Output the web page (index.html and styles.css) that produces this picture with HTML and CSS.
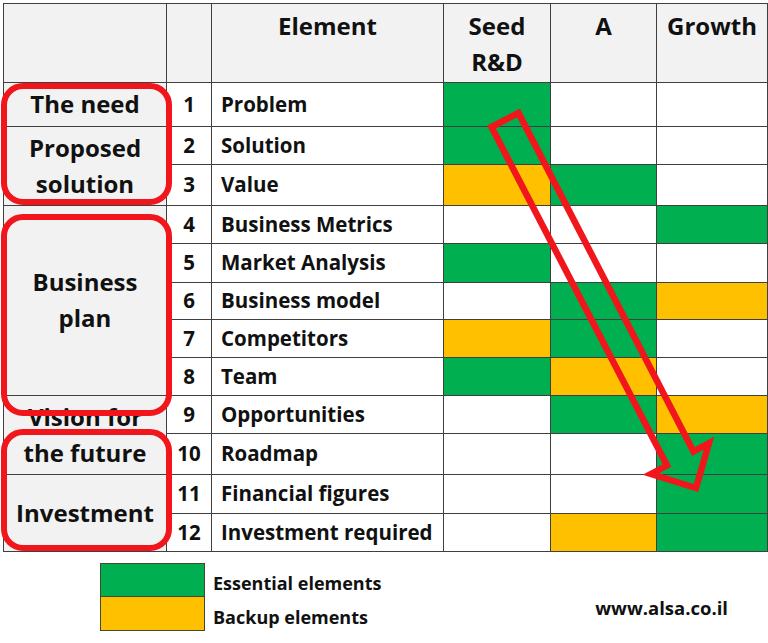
FILE: index.html
```html
<!DOCTYPE html>
<html>
<head>
<meta charset="utf-8">
<link rel="stylesheet" href="styles.css">
</head>
<body>
<div class="page">
  <div class="chart">
    <div class="grid">
      <div class="hd"></div>
      <div class="hd"></div>
      <div class="hd hd-text">Element</div>
      <div class="hd hd-text">Seed<br>R&amp;D</div>
      <div class="hd hd-text">A</div>
      <div class="hd hd-text">Growth</div>

      <div class="cat r1">The need</div>
      <div class="cat r2">Proposed<br>solution</div>
      <div class="cat r3">Business<br>plan</div>
      <div class="cat r4">Vision for<br>the future</div>
      <div class="cat r5">Investment</div>

      <div class="num">1</div><div class="el">Problem</div><div class="g"></div><div class="w"></div><div class="w"></div>
      <div class="num">2</div><div class="el">Solution</div><div class="g"></div><div class="w"></div><div class="w"></div>
      <div class="num">3</div><div class="el">Value</div><div class="y"></div><div class="g"></div><div class="w"></div>
      <div class="num">4</div><div class="el">Business Metrics</div><div class="w"></div><div class="w"></div><div class="g"></div>
      <div class="num">5</div><div class="el">Market Analysis</div><div class="g"></div><div class="w"></div><div class="w"></div>
      <div class="num">6</div><div class="el">Business model</div><div class="w"></div><div class="g"></div><div class="y"></div>
      <div class="num">7</div><div class="el">Competitors</div><div class="y"></div><div class="g"></div><div class="w"></div>
      <div class="num">8</div><div class="el">Team</div><div class="g"></div><div class="y"></div><div class="w"></div>
      <div class="num">9</div><div class="el">Opportunities</div><div class="w"></div><div class="g"></div><div class="y"></div>
      <div class="num">10</div><div class="el">Roadmap</div><div class="w"></div><div class="w"></div><div class="g"></div>
      <div class="num">11</div><div class="el">Financial figures</div><div class="w"></div><div class="w"></div><div class="g"></div>
      <div class="num">12</div><div class="el">Investment required</div><div class="w"></div><div class="y"></div><div class="g"></div>
    </div>
    <div class="ring ring-a"></div>
    <div class="ring ring-b"></div>
    <div class="ring ring-c"></div>
  </div>

  <div class="legend">
    <div class="keys">
      <div class="key"><span class="swatch sw-g"></span><span class="key-label">Essential elements</span></div>
      <div class="key"><span class="swatch sw-y"></span><span class="key-label">Backup elements</span></div>
    </div>
    <div class="site">www.alsa.co.il</div>
  </div>

  <svg class="arrow" width="768" height="643" viewBox="0 0 768 643">
    <polygon points="491.5,127 667,465.5 651,474 696,488 709,443 693.5,451.5 518.5,113" fill="none" stroke="#f0161b" stroke-width="6.5" stroke-linejoin="miter" stroke-miterlimit="10"/>
  </svg>
</div>
</body>
</html>
```

FILE: styles.css
```css
html, body {
  margin: 0;
  padding: 0;
  background: #ffffff;
}

body {
  font-family: "Open Sans", Lato, "Liberation Sans", sans-serif;
  color: #111111;
}

.page {
  position: relative;
  width: 768px;
  height: 643px;
  overflow: hidden;
}

.chart {
  position: relative;
  padding: 3px 0 0 3px;
}

.grid {
  display: grid;
  grid-template-columns: 162px 44px 231px 106px 105px 110px;
  grid-template-rows: 78px 43px 37px 40px 37px 38px 36px 37px 37px 37px 40px 38px 37px;
  gap: 1px;
  padding: 1px;
  width: 765px;
  box-sizing: border-box;
  background: #3f3f3f;
}

.hd {
  background: #f2f2f2;
}

.hd-text {
  font-weight: 700;
  font-size: 24px;
  line-height: 36px;
  text-align: center;
  padding-top: 4px;
  color: #111;
}

.cat {
  grid-column: 1;
  background: #f2f2f2;
  display: flex;
  align-items: center;
  justify-content: center;
  text-align: center;
  font-weight: 700;
  font-size: 24px;
  line-height: 36px;
  padding-bottom: 1px;
  color: #111;
}

.r1 { grid-row: 2; }
.r2 { grid-row: 3 / span 2; }
.r3 { grid-row: 5 / span 5; }
.r4 { grid-row: 10 / span 2; }
.r5 { grid-row: 12 / span 2; }

.num {
  grid-column: 2;
  background: #fff;
  display: flex;
  align-items: center;
  justify-content: center;
  padding-bottom: 2px;
  font-weight: 700;
  font-size: 20.5px;
}

.el {
  background: #fff;
  display: flex;
  align-items: center;
  padding-left: 9px;
  padding-bottom: 2px;
  font-weight: 700;
  font-size: 20.5px;
  white-space: nowrap;
}

.g { background: #00b050; }
.y { background: #ffc000; }
.w { background: #ffffff; }

.ring {
  position: absolute;
  left: 1px;
  width: 171px;
  border: 6px solid #f0161b;
  border-radius: 22px;
  box-sizing: border-box;
}

.ring-a { top: 83px; height: 122px; }
.ring-b { top: 214px; height: 202px; }
.ring-c { top: 429px; height: 122px; }

.legend {
  display: flex;
  align-items: flex-end;
  padding: 11px 40px 0 100px;
}

.keys {
  display: flex;
  flex-direction: column;
}

.key {
  display: flex;
  align-items: center;
  height: 34px;
}

.swatch {
  width: 105px;
  height: 34px;
  box-sizing: border-box;
  border: 1px solid #3f4a30;
}

.sw-g { background: #00b050; }
.sw-y { background: #ffc000; border-top: none; }

.key-label {
  margin-left: 8px;
  padding-top: 5px;
  font-weight: 700;
  font-size: 18px;
}

.site {
  margin-left: auto;
  margin-bottom: 11px;
  font-weight: 700;
  font-size: 18.5px;
}

.arrow {
  position: absolute;
  left: 0;
  top: 0;
  pointer-events: none;
}
```
